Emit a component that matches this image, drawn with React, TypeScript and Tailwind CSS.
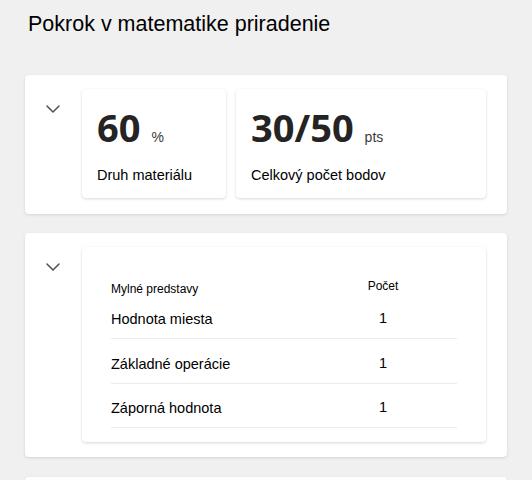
import { ChevronDown } from 'lucide-react';

const misconceptions = [
  { name: 'Hodnota miesta', count: 1 },
  { name: 'Základné operácie', count: 1 },
  { name: 'Záporná hodnota', count: 1 },
];

const rowPadding = ['pt-[12px]', 'pt-[15px]', 'pt-[14px]'];

const Toggle = () => (
  <div className="w-14 shrink-0 flex justify-center pt-[8px]">
    <ChevronDown className="w-6 h-6 text-[#505050]" strokeWidth={1.5} />
  </div>
);

const StatCard = ({ value, unit, label, width }: { value: string; unit: string; label: string; width: string }) => (
  <div className={`${width} bg-white rounded shadow-[0_1px_3px_rgba(0,0,0,0.16)] pl-[15px] pt-[19px] pb-[13px]`}>
    <div className="flex items-baseline h-[38px]">
      <span className="text-[38px] leading-none font-bold text-[#252423] font-['Open_Sans',sans-serif]">{value}</span>
      <span className="ml-[11px] text-[14px] leading-none text-[#3b3a39]">{unit}</span>
    </div>
    <div className="mt-[19px] text-[14.5px] leading-5 text-black">{label}</div>
  </div>
);

export default function App() {
  return (
    <div className="min-h-screen bg-[#f0f0f0] font-['Liberation_Sans',Arial,sans-serif] px-[25px] pt-[10px] pb-4">
      <h1 className="pl-[3px] text-[21.5px] leading-7 text-black">Pokrok v matematike priradenie</h1>

      {/* summary */}
      <section className="mt-[37px] bg-white rounded-sm shadow-[0_1px_3px_rgba(0,0,0,0.12)] flex pt-[14px] pb-[16px]">
        <Toggle />
        <div className="flex gap-[10px] pl-px">
          <StatCard value="60" unit="%" label="Druh materiálu" width="w-[144px]" />
          <StatCard value="30/50" unit="pts" label="Celkový počet bodov" width="w-[250px]" />
        </div>
      </section>

      {/* misconceptions table */}
      <section className="mt-[19px] bg-white rounded-sm shadow-[0_1px_3px_rgba(0,0,0,0.12)] flex pt-[14px] pb-[15px]">
        <Toggle />
        <div className="ml-px w-[404px] bg-white rounded shadow-[0_1px_3px_rgba(0,0,0,0.16)] px-[29px] pt-[31px] pb-[14px]">
          <div className="flex items-start text-[12px] leading-4 text-black">
            <div className="flex-1 pt-[3px]">Mylné predstavy</div>
            <div className="w-[148px] text-center">Počet</div>
          </div>
          {misconceptions.map((m, i) => (
            <div
              key={m.name}
              className={`flex border-b border-[#ebebeb] pb-[9px] text-[14.5px] leading-5 text-black ${rowPadding[i]}`}
            >
              <div className="flex-1">{m.name}</div>
              <div className="w-[148px] text-center -translate-y-px">{m.count}</div>
            </div>
          ))}
        </div>
      </section>

      <section className="mt-[20px] h-[60px] bg-white rounded-sm shadow-[0_1px_3px_rgba(0,0,0,0.12)]" />
    </div>
  );
}
